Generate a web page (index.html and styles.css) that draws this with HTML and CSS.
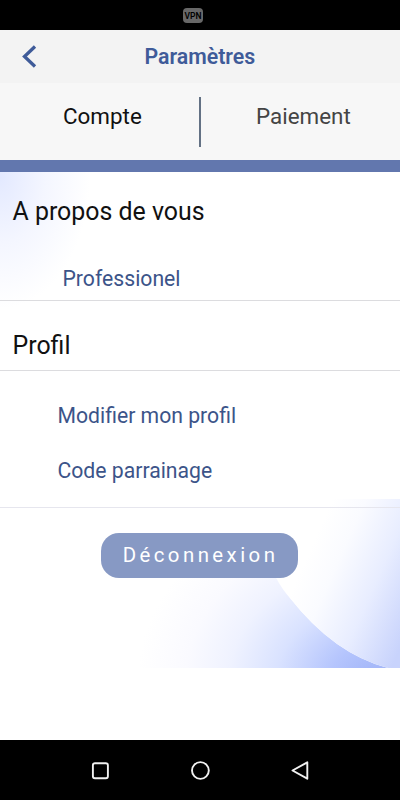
FILE: index.html
```html
<!DOCTYPE html>
<html lang="fr">
<head>
<meta charset="utf-8">
<title>Paramètres</title>
<link rel="stylesheet" href="styles.css">
</head>
<body>
<div class="status"><span class="vpn">VPN</span></div>
<header class="header">
  <svg class="back" width="18" height="26" viewBox="0 0 18 26"><path d="M16 2.500 5.500 12.500 16 22.500" fill="none" stroke="#3f5b99" stroke-width="3.300"/></svg>
  <h1>Paramètres</h1>
</header>
<nav class="tabs">
  <a class="tab active"><span class="compte">Compte</span></a>
  <i class="divider"></i>
  <a class="tab"><span class="paiement">Paiement</span></a>
</nav>
<main class="content">
  <svg class="backdrop" width="400" height="568" viewBox="0 0 400 568">
    <defs>
      <radialGradient id="corner" gradientUnits="userSpaceOnUse" cx="0" cy="0" r="1" gradientTransform="translate(0 5) scale(90 132)">
        <stop offset="0" stop-color="#e3e9ff"/><stop offset=".5" stop-color="#f4f6ff"/><stop offset="1" stop-color="#fff"/>
      </radialGradient>
      <radialGradient id="wave" gradientUnits="userSpaceOnUse" cx="0" cy="0" r="1" gradientTransform="translate(378 508) scale(240 190)">
        <stop offset="0" stop-color="#9eb2f7"/><stop offset=".2" stop-color="#b5c5fd"/><stop offset=".42" stop-color="#d9e2ff"/><stop offset=".62" stop-color="#eff2ff"/><stop offset=".8" stop-color="#fafaff"/><stop offset="1" stop-color="#fff"/>
      </radialGradient>
      <linearGradient id="disc" gradientUnits="userSpaceOnUse" x1="300" y1="400" x2="412" y2="450">
        <stop offset="0" stop-color="#fff"/><stop offset=".25" stop-color="#fafbff"/><stop offset=".6" stop-color="#e8edff"/><stop offset="1" stop-color="#c8d3fc"/>
      </linearGradient>
    </defs>
    <rect width="100" height="140" fill="url(#corner)"/>
    <path d="M100 370H260Q275 410 290 426Q334 482 388 496H100Z" fill="url(#wave)"/>
    <path d="M260 327H400V496H388Q334 482 290 426Q270 399 260 370Z" fill="url(#disc)"/>
  </svg>
  <section class="about">
    <h2>A propos de vous</h2>
    <a class="link pro">Professionel</a>
  </section>
  <section class="profile"><h2>Profil</h2></section>
  <section class="links">
    <a class="link modify">Modifier mon profil</a>
    <a class="link code">Code parrainage</a>
  </section>
  <button class="logout">Déconnexion</button>
</main>
<footer class="system">
  <svg width="400" height="60" viewBox="0 0 400 60" fill="none" stroke="#f1f1f1" stroke-width="1.900" stroke-linejoin="round">
    <rect x="92.900" y="23.200" width="15" height="15" rx="2"/>
    <circle cx="200.400" cy="30.500" r="8.400"/>
    <path d="M292.500 30.500 307.300 22.300V38.700Z"/>
  </svg>
</footer>
</body>
</html>
```
FILE: styles.css
```css
* { box-sizing: border-box; }
body { margin: 0; width: 400px; height: 800px; display: flex; flex-direction: column; overflow: hidden; background: #fff; font-family: Roboto, sans-serif; color: #111; }
h1, h2 { margin: 0; }
.status { height: 30px; background: #000; display: flex; align-items: center; padding-left: 183px; }
.vpn { width: 20px; height: 15px; border-radius: 4px; background: #686868; color: #000; font-size: 8.5px; font-weight: 600; line-height: 16px; text-align: center; }
.header { height: 53px; background: #f3f3f3; display: flex; align-items: center; padding-left: 19px; }
.back { display: block; }
h1 { margin-left: 107.5px; font-size: 21.3px; line-height: 26px; font-weight: 600; color: #3f5b99; white-space: nowrap; }
.tabs { height: 77px; background: #f7f7f7; display: flex; }
.tab { width: 199px; padding-top: 18px; font-size: 22.4px; line-height: 30px; color: #444; }
.active { color: #111; }
.compte { margin-left: 63px; }
.paiement { margin-left: 55px; }
.divider { width: 2px; height: 50px; margin-top: 14px; background: #637184; }
.content { position: relative; height: 580px; border-top: 12px solid #6277ae; }
.backdrop { position: absolute; left: 0; top: 0; }
section { position: relative; border-bottom: 1px solid #dcdcdf; }
.about { height: 129px; padding: 25px 0 0 12.5px; }
h2 { font-size: 24.9px; line-height: 30px; font-weight: 400; }
.link { display: block; font-size: 21.2px; line-height: 28px; color: #3c5489; white-space: nowrap; }
.pro { margin: 38px 0 0 50px; }
.profile { height: 70px; padding: 30px 0 0 12.5px; }
.links { height: 137px; padding: 31px 0 0 57.5px; border-color: #e6e6ee; }
.code { margin-top: 27px; }
.logout { position: relative; display: block; width: 197px; height: 45px; margin: 25px 0 0 101px; padding: 0 0 0 2px; border: 0; border-radius: 18px; background: #8799c4; color: #fff; font: 400 20.4px/45px Roboto, sans-serif; letter-spacing: 3.45px; }
.system { height: 60px; background: #000; }
.system svg { display: block; }
```
